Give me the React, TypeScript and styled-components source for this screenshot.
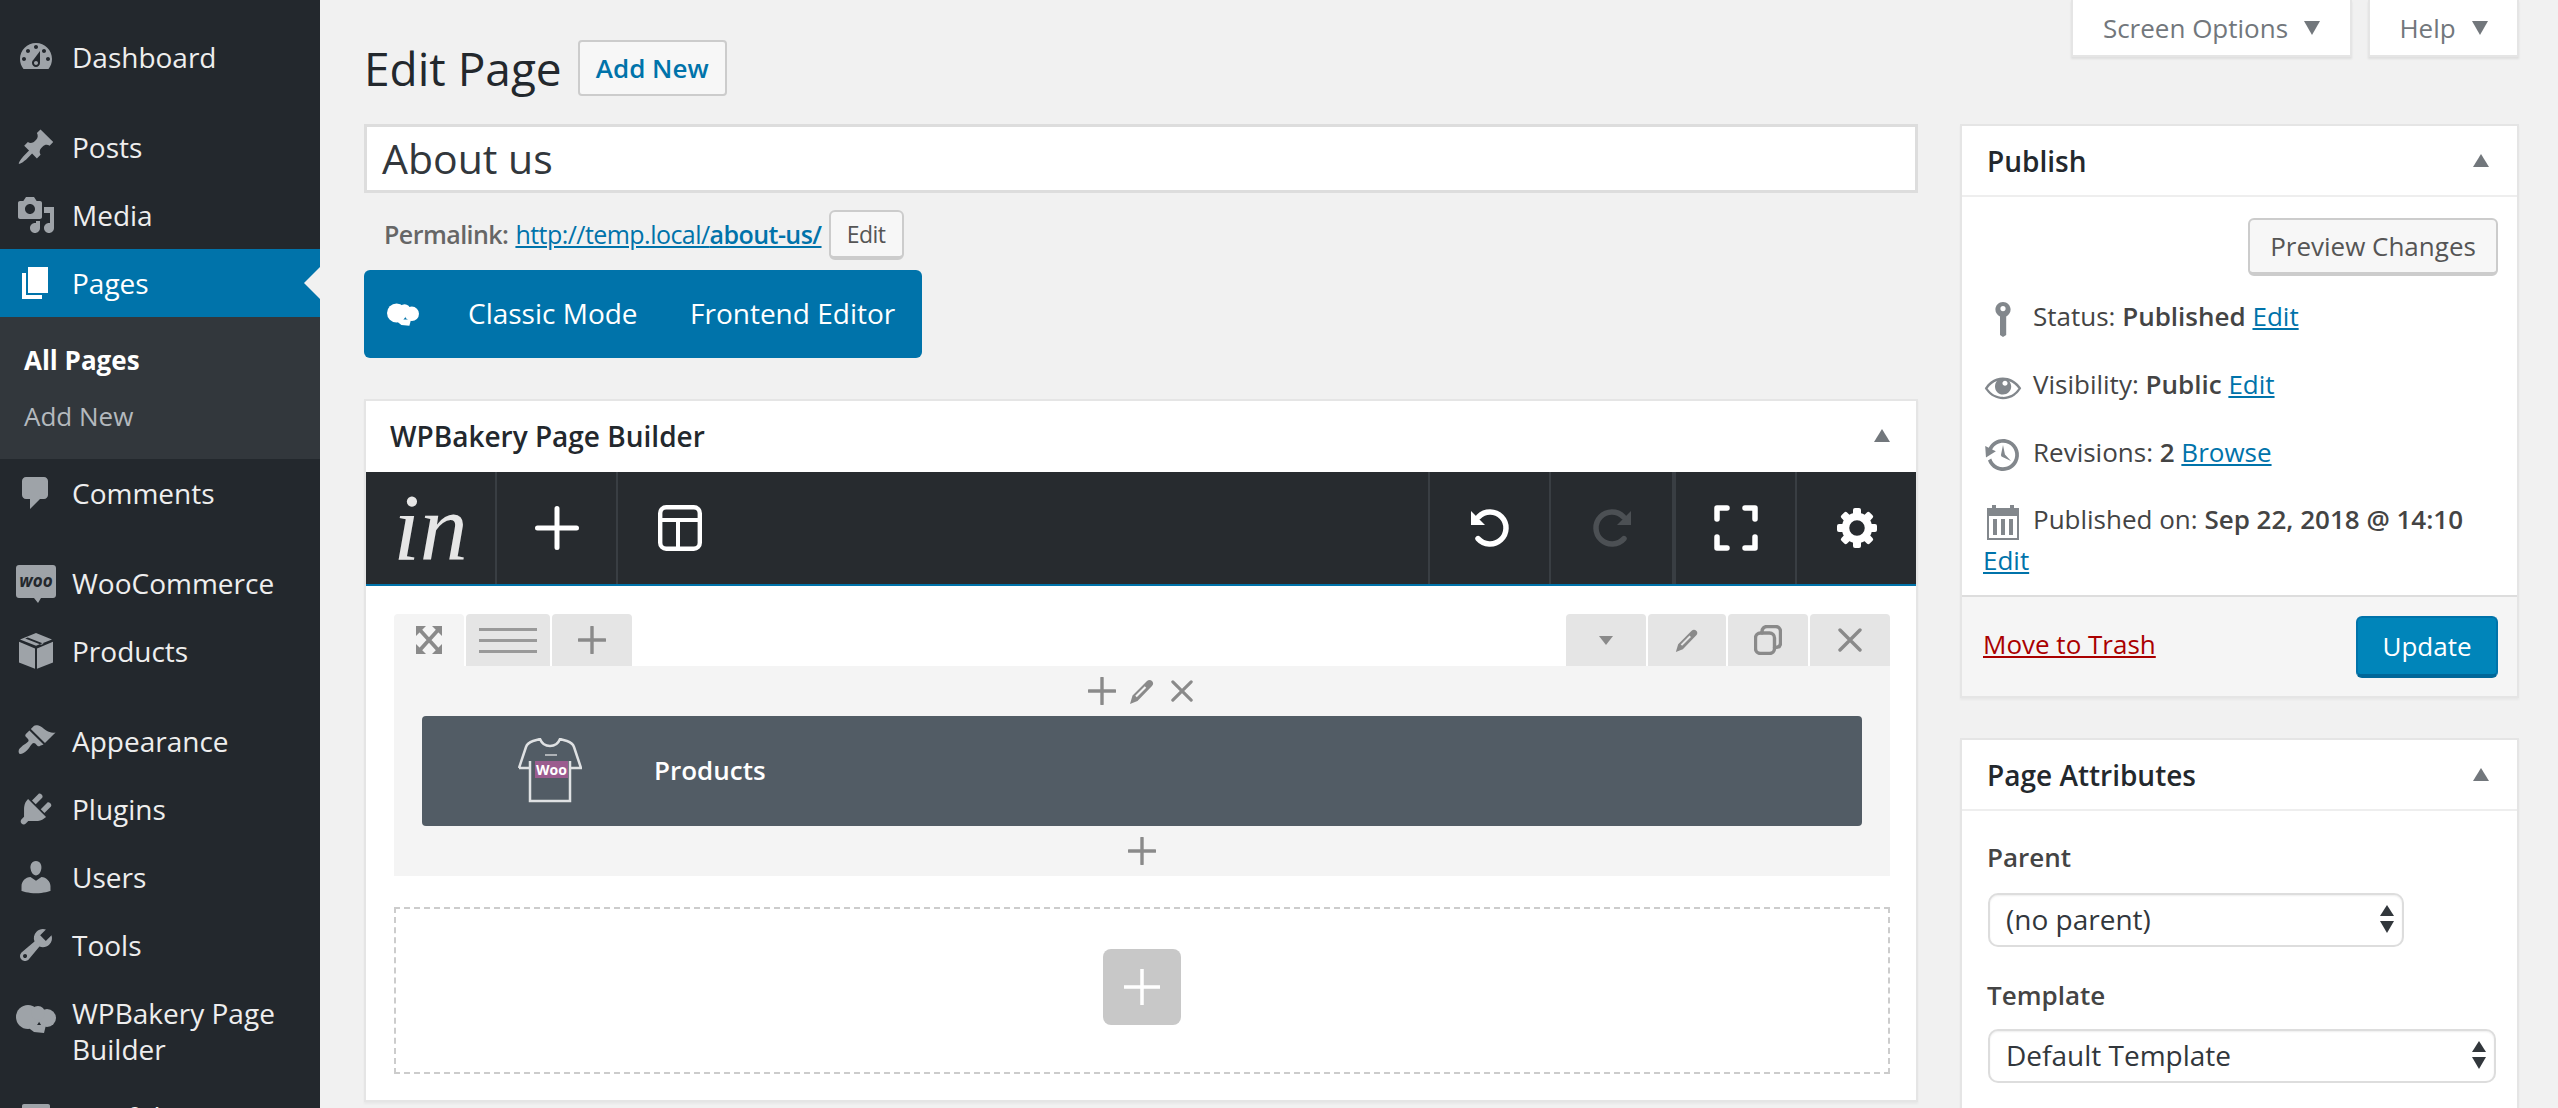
import React from "react";
import styled, { createGlobalStyle } from "styled-components";

const GlobalStyle = createGlobalStyle`
	html, body {
		margin: 0;
		padding: 0;
		height: 1108px;
		overflow: hidden;
		background: #f1f1f1;
	}
	body {
		font-family: "Open Sans", "Noto Sans", sans-serif;
		font-size: 26px;
		color: #444;
	}
	* {
		box-sizing: border-box;
	}
`;

const menuPaths: Record<string, string> = {
	dashboard:
		"M3.76 16h12.48c1.1-1.37 1.76-3.11 1.76-5 0-4.42-3.58-8-8-8s-8 3.58-8 8c0 1.89.66 3.63 1.76 5zM10 4c.55 0 1 .45 1 1s-.45 1-1 1-1-.45-1-1 .45-1 1-1zM6 6c.55 0 1 .45 1 1s-.45 1-1 1-1-.45-1-1 .45-1 1-1zm8 0c.55 0 1 .45 1 1s-.45 1-1 1-1-.45-1-1 .45-1 1-1zm-5.37 5.55L12 7v6c0 1.1-.9 2-2 2s-2-.9-2-2c0-.57.24-1.08.63-1.45zM4 10c.55 0 1 .45 1 1s-.45 1-1 1-1-.45-1-1 .45-1 1-1zm12 0c.55 0 1 .45 1 1s-.45 1-1 1-1-.45-1-1 .45-1 1-1zm-5 3c0-.55-.45-1-1-1s-1 .45-1 1 .45 1 1 1 1-.45 1-1z",
	posts:
		"M10.44 3.02l1.82-1.82 6.36 6.35-1.83 1.82c-1.05-.68-2.48-.57-3.41.36l-.75.75c-.92.93-1.04 2.35-.35 3.41l-1.83 1.82-2.41-2.41-2.8 2.79c-.42.42-3.38 2.71-3.8 2.29s1.86-3.39 2.28-3.81l2.79-2.79L4.1 9.36l1.83-1.82c1.05.69 2.48.57 3.4-.36l.75-.75c.93-.92 1.05-2.35.36-3.41z",
	media:
		"M13 11V4c0-.55-.45-1-1-1h-1.67L9 1H5L3.67 3H2c-.55 0-1 .45-1 1v7c0 .55.45 1 1 1h10c.55 0 1-.45 1-1zM7 4.5c1.38 0 2.5 1.12 2.5 2.5S8.38 9.5 7 9.5 4.5 8.38 4.5 7 5.62 4.5 7 4.5zM14 6h5v10.5c0 1.38-1.12 2.5-2.5 2.5S14 17.88 14 16.5s1.12-2.5 2.5-2.5c.17 0 .34.02.5.05V9h-3V6zm-4 8.05V13h2v3.5c0 1.38-1.12 2.5-2.5 2.5S7 17.88 7 16.5 8.12 14 9.5 14c.17 0 .34.02.5.05z",
	pages: "M6 15V2h10v13H6zm-1 1h8v2H3V5h2v11z",
	comments:
		"M5 2h9c1.1 0 2 .9 2 2v7c0 1.1-.9 2-2 2h-2l-5 5v-5H5c-1.1 0-2-.9-2-2V4c0-1.1.9-2 2-2z",
	products:
		"M10 1l8 3.2-8 3.2-8-3.2zM4.6 3.7l8 3.2 1.3-.5-8-3.2zM1.5 5.4l8 3.3v10.2l-8-3.2zM10.5 8.7l8-3.3v10.3l-8 3.2z",
	appearance:
		"M14.48 11.06L7.41 3.99l1.5-1.5c.5-.56 2.3-.47 3.51.32 1.21.8 1.43 1.28 2.91 2.1 1.18.64 2.45 1.26 4.45.85zm-.71.71L6.7 4.7 4.93 6.47c-.39.39-.39 1.02 0 1.41l1.06 1.06c.39.39.39 1.03 0 1.42-.6.6-1.43 1.11-2.21 1.69-.35.26-.7.53-1.01.84C1.43 13.71.96 15.08 1.54 16.3c.5.5 2.38.12 4.13-1.77.31-.31.58-.66.84-1.01.58-.78 1.09-1.61 1.69-2.21.39-.39 1.03-.39 1.42 0l1.06 1.06c.39.39 1.02.39 1.41 0z",
	plugins:
		"M13.11 4.36L9.87 7.6 8 5.73l3.24-3.24c.35-.34 1.05-.2 1.56.32.52.51.66 1.21.31 1.55zm-8 1.77l.91-1.12 9.01 9.01-1.19.84c-.71.71-2.63 1.16-3.82 1.16H6.14L4.9 17.26c-.59.59-1.54.59-2.12 0-.59-.58-.59-1.53 0-2.12l1.24-1.24v-3.88c0-1.13.4-3.19 1.09-3.89zm7.26 3.97l3.24-3.24c.34-.35 1.04-.21 1.55.31.52.51.66 1.21.31 1.55l-3.24 3.25z",
	users:
		"M10 9.25c-2.27 0-2.73-3.44-2.73-3.44C7 4.02 7.82 2 9.97 2c2.16 0 2.98 2.02 2.71 3.81 0 0-.41 3.44-2.68 3.44zm0 2.57L12.72 10c2.39 0 4.52 2.33 4.52 4.53v2.49s-3.65 1.13-7.24 1.13c-3.65 0-7.24-1.13-7.24-1.13v-2.49c0-2.25 1.94-4.48 4.47-4.48z",
	tools:
		"M16.68 9.77c-1.34 1.34-3.3 1.67-4.95.99l-5.41 6.52c-.99.99-2.59.99-3.58 0s-.99-2.59 0-3.57l6.52-5.42c-.68-1.65-.35-3.61.99-4.95 1.28-1.28 3.12-1.62 4.72-1.06l-2.89 2.89 2.82 2.82 2.86-2.87c.53 1.58.18 3.39-1.08 4.65zM3.81 16.21c.4.39 1.04.39 1.43 0 .4-.4.4-1.04 0-1.43-.39-.4-1.03-.4-1.43 0-.39.39-.39 1.03 0 1.43z",
	portfolio: "M4 3.5h12c.6 0 1 .4 1 1V17c0 .6-.4 1-1 1H4c-.6 0-1-.4-1-1V4.500c0-.6.4-1 1-1z",
};

type MenuEntry = { key: string; label: string; gapBefore?: boolean };

const topMenu: MenuEntry[] = [
	{ key: "dashboard", label: "Dashboard" },
	{ key: "posts", label: "Posts", gapBefore: true },
	{ key: "media", label: "Media" },
];

const lowerMenu: MenuEntry[] = [
	{ key: "comments", label: "Comments" },
	{ key: "woo", label: "WooCommerce", gapBefore: true },
	{ key: "products", label: "Products" },
	{ key: "appearance", label: "Appearance", gapBefore: true },
	{ key: "plugins", label: "Plugins" },
	{ key: "users", label: "Users" },
	{ key: "tools", label: "Tools" },
	{ key: "bakery", label: "WPBakery Page Builder" },
	{ key: "portfolio", label: "Portfolio" },
];

// the WPBakery cloud, used in the menu and on the blue mode bar
const BakeryCloud = () => (
	<>
		<circle cx="6" cy="11" r="6" />
		<circle cx="15.500" cy="11.500" r="4.500" />
		<circle cx="11" cy="9" r="3.500" />
		<polygon points="7,15 15,15 14,19 9,18.500 7,17" />
	</>
);

const MenuGlyph = ({ name }: { name: string }) => {
	if (name === "woo") {
		return (
			<MenuSvg viewBox="0 0 40 40">
				<path d="M3 2h34c1.7 0 3 1.3 3 3v27c0 1.7-1.3 3-3 3H25l-3 5-4-5H3c-1.700 0-3-1.300-3-3V5c0-1.700 1.300-3 3-3z" />
				<WooText x="20" y="24" textAnchor="middle">
					woo
				</WooText>
			</MenuSvg>
		);
	}
	if (name === "bakery") {
		return (
			<MenuSvg viewBox="0 0 20 20">
				<BakeryCloud />
			</MenuSvg>
		);
	}
	return (
		<MenuSvg viewBox="0 0 20 20">
			<path d={menuPaths[name]} />
		</MenuSvg>
	);
};

const MetaCaret = () => (
	<CaretSvg viewBox="0 0 16 14">
		<polygon points="0,0 16,0 8,14" />
	</CaretSvg>
);

const BoxCaret = () => (
	<BoxCaretSvg viewBox="0 0 16 13">
		<polygon points="8,0 16,13 0,13" />
	</BoxCaretSvg>
);

const SmallPlus = ({ size }: { size: number }) => (
	<LightSvg viewBox="0 0 28 28" width={size} height={size}>
		<path d="M14 1v26M1 14h26" />
	</LightSvg>
);

const SmallPencil = ({ size, slit }: { size: number; slit: string }) => (
	<FilledSvg viewBox="0 0 28 28" width={size} height={size}>
		<path d="M2 27l2.500-8.500L19 4c1.500-1.500 3.500-1.500 5 0s1.500 3.500 0 5L9.500 24z" />
		<path d="M8 19.500L17.500 10" stroke={slit} strokeWidth="2.200" fill="none" />
	</FilledSvg>
);

const SmallCross = ({ size }: { size: number }) => (
	<LightSvg viewBox="0 0 24 24" width={size} height={size}>
		<path d="M2 2l20 20M22 2L2 22" />
	</LightSvg>
);

const Gear = () => (
	<svg viewBox="0 0 44 44" width="44" height="44">
		<circle cx="22" cy="22" r="11.5" fill="none" stroke="#fff" strokeWidth="7.5" />
		{[0, 45, 90, 135, 180, 225, 270, 315].map((deg) => (
			<rect
				key={deg}
				x="18"
				y="2"
				width="8"
				height="8"
				rx="2"
				fill="#fff"
				transform={`rotate(${deg} 22 22)`}
			/>
		))}
	</svg>
);

const Sidebar = () => (
	<SideColumn>
		{topMenu.map((m) => (
			<MenuRow key={m.key} $gap={m.gapBefore}>
				<MenuGlyph name={m.key} />
				<span>{m.label}</span>
			</MenuRow>
		))}
		<MenuRow $active>
			<MenuGlyph name="pages" />
			<span>Pages</span>
		</MenuRow>
		<SubMenu>
			<SubItem $current>All Pages</SubItem>
			<SubItem>Add New</SubItem>
		</SubMenu>
		{lowerMenu.map((m) => (
			<MenuRow key={m.key} $gap={m.gapBefore} $tall={m.key === "bakery"}>
				<MenuGlyph name={m.key} />
				<span>{m.label}</span>
			</MenuRow>
		))}
	</SideColumn>
);

const BuilderBox = () => (
	<Box>
		<BoxHeader>
			<BoxTitle>WPBakery Page Builder</BoxTitle>
			<BoxCaret />
		</BoxHeader>
		<Toolbar>
			<ToolGroup>
				<ToolCell $w={131}>
					<LogoMark>in</LogoMark>
				</ToolCell>
				<ToolCell $w={121}>
					<ToolSvg viewBox="0 0 44 44" width="44" height="44">
						<path d="M22 2.500v39M2.500 22h39" />
					</ToolSvg>
				</ToolCell>
				<ToolCell $w={124} $plain>
					<ToolSvg viewBox="0 0 44 46" width="44" height="46">
						<rect x="2.200" y="2.200" width="39.600" height="41.600" rx="6" strokeWidth="4.400" />
						<path d="M2.200 15h39.600M20 15v29" strokeWidth="4" strokeLinecap="butt" />
					</ToolSvg>
				</ToolCell>
			</ToolGroup>
			<ToolGroup>
				<ToolCell $w={123} $first>
					<ToolSvg viewBox="0 0 48 48" width="48" height="48">
						<path d="M12.700 12.700A16 16 0 1 1 12 34.600" strokeWidth="5.500" />
						<polygon points="5,7 5,21 19,21" fill="#fff" stroke="none" />
					</ToolSvg>
				</ToolCell>
				<ToolCell $w={123}>
					<ToolSvg viewBox="0 0 48 48" width="48" height="48" $dim>
						<path d="M35.300 12.700A16 16 0 1 0 36 34.600" strokeWidth="5.500" />
						<polygon points="43,7 43,21 29,21" fill="#4c5054" stroke="none" />
					</ToolSvg>
				</ToolCell>
				<ToolCell $w={123} $thick>
					<ToolSvg viewBox="0 0 44 46" width="44" height="46">
						<path
							d="M13 3H3v11M31 3h10v11M13 43H3V32M31 43h10V32"
							strokeWidth="5.500"
						/>
					</ToolSvg>
				</ToolCell>
				<ToolCell $w={119} $plain>
					<Gear />
				</ToolCell>
			</ToolGroup>
		</Toolbar>
		<Canvas>
			<RowTabs>
				<TabGroup>
					<RowTab $w={70} $open>
						<GreySvg viewBox="0 0 26 28" width="26" height="28">
							<polygon points="0,0 10,0 0,10" />
							<polygon points="26,0 16,0 26,10" />
							<polygon points="0,28 10,28 0,18" />
							<polygon points="26,28 16,28 26,18" />
							<path d="M3 3l20 22M23 3L3 25" stroke="#8a8a8a" strokeWidth="3.800" />
						</GreySvg>
					</RowTab>
					<RowTab $w={84}>
						<LinesIcon>
							<i />
							<i />
							<i />
						</LinesIcon>
					</RowTab>
					<RowTab $w={80}>
						<SmallPlus size={28} />
					</RowTab>
				</TabGroup>
				<TabGroup>
					<RowTab $w={80}>
						<GreySvg viewBox="0 0 14 9" width="14" height="9">
							<polygon points="0,0 14,0 7,9" />
						</GreySvg>
					</RowTab>
					<RowTab $w={78}>
						<SmallPencil size={26} slit="#e5e5e5" />
					</RowTab>
					<RowTab $w={80}>
						<LightSvg viewBox="0 0 28 30" width="28" height="30">
							<rect x="1.500" y="8" width="19" height="20.500" rx="5" />
							<path d="M8 8V6.500c0-2.800 2-5 5-5h8.500c2.800 0 5 2.200 5 5V18c0 2.800-2 4.500-5 4.500h-1" />
						</LightSvg>
					</RowTab>
					<RowTab $w={80}>
						<SmallCross size={24} />
					</RowTab>
				</TabGroup>
			</RowTabs>
			<RowBody>
				<ElementControls>
					<SmallPlus size={28} />
					<SmallPencil size={28} slit="#f4f4f4" />
					<SmallCross size={22} />
				</ElementControls>
				<ElementCard>
					<svg viewBox="0 0 64 65" width="64" height="65">
						<path
							d="M12 23v40h40V23M1 30l7-21c1-3 4-5 7-6l7-2c2 5 5 7 10 7s8-2 10-7l7 2c3 1 6 3 7 6l7 21H53M1 30h11"
							fill="none"
							stroke="#dfe1e3"
							strokeWidth="2.500"
						/>
						<path d="M27 17h12" stroke="#aeb2b6" strokeWidth="2" />
						<rect x="17" y="23" width="33" height="17" fill="#9b5c8f" />
						<ShirtLabel x="33.500" y="36.500" textAnchor="middle">
							Woo
						</ShirtLabel>
					</svg>
					<ElementName>Products</ElementName>
				</ElementCard>
				<ElementAdd>
					<SmallPlus size={28} />
				</ElementAdd>
			</RowBody>
			<DropZone>
				<AddRowButton>
					<svg viewBox="0 0 36 36" width="36" height="36">
						<path d="M18 0v36M0 18h36" stroke="#fff" strokeWidth="3.500" />
					</svg>
				</AddRowButton>
			</DropZone>
		</Canvas>
	</Box>
);

const PublishBox = () => (
	<Box>
		<SideBoxHeader>
			<BoxTitle>Publish</BoxTitle>
			<BoxCaret />
		</SideBoxHeader>
		<PublishBody>
			<PreviewLine>
				<WpButton $w={250} $h={58}>
					Preview Changes
				</WpButton>
			</PreviewLine>
			<MiscRow>
				<MiscIcon viewBox="0 0 20 20">
					<path d="M10 1.500c2.100 0 3.800 1.700 3.800 3.800 0 1.500-.9 2.800-2.200 3.400v9.300L10 19l-1.500-1V8.700C7.100 8.100 6.200 6.800 6.200 5.300c0-2.100 1.700-3.800 3.800-3.800zM10 3.500a1.300 1.300 0 1 0 0 2.600 1.300 1.300 0 0 0 0-2.600z" />
				</MiscIcon>
				Status: <b>Published</b> <Link>Edit</Link>
			</MiscRow>
			<MiscRow>
				<MiscIcon viewBox="0 0 20 20">
					<path d="M18.300 9.500C15 4.900 8.500 3.800 3.900 7.200c-1.200.9-2.200 2.100-3 3.400.2.400.5.8.8 1.200 3.300 4.600 9.600 5.600 14.200 2.400.9-.7 1.700-1.400 2.400-2.400.3-.4.5-.8.8-1.200-.3-.4-.5-.8-.8-1.100zm-8.200-2.300c.5-.5 1.300-.5 1.800 0s.5 1.300 0 1.800-1.300.5-1.800 0c-.5-.4-.5-1.300 0-1.800zm-.1 7.700c-3.100 0-6-1.600-7.700-4.200C3.500 9 5.100 7.800 7 7c-.7.800-1 1.700-1 2.700 0 2.200 1.700 4.100 4 4.100 2.200 0 4.100-1.700 4.100-4 0-1-.4-2-1-2.700 1.900.8 3.500 2 4.600 3.700-1.700 2.600-4.600 4.200-7.700 4.200z" />
				</MiscIcon>
				Visibility: <b>Public</b> <Link>Edit</Link>
			</MiscRow>
			<MiscRow>
				<MiscIcon viewBox="0 0 20 20">
					<path d="M13.650 2.880c3.930 2.010 5.480 6.840 3.470 10.770s-6.830 5.480-10.770 3.470c-1.870-.96-3.200-2.560-3.860-4.400l1.640-1.030c.45 1.570 1.520 2.950 3.080 3.760 3.010 1.540 6.690.35 8.230-2.660 1.550-3.010.36-6.690-2.650-8.240C9.780 3.010 6.100 4.200 4.560 7.210l1.880.97-4.950 3.080-.39-5.820 1.780.91C4.900 2.400 9.750.89 13.650 2.880zm-4.360 7.830C9.110 10.530 9 10.280 9 10c0-.07.03-.12.04-.19h-.01L10 5l.97 4.810L14 13l-4.500-2.120.02-.02c-.08-.04-.16-.09-.23-.15z" />
				</MiscIcon>
				Revisions: <b>2</b> <Link>Browse</Link>
			</MiscRow>
			<MiscRow>
				<MiscIcon viewBox="0 0 20 20">
					<path d="M2 3h2.500V1.500h2V3h7V1.500h2V3H18v16H2zM3 7v11h14V7zM5 8.500h2v8H5zM9 8.500h2v8H9zM13 8.500h2v8h-2z" fillRule="evenodd" />
				</MiscIcon>
				Published on: <b>Sep 22, 2018 @ 14:10</b> <Link>Edit</Link>
			</MiscRow>
		</PublishBody>
		<PublishFooter>
			<TrashLink>Move to Trash</TrashLink>
			<PrimaryButton>Update</PrimaryButton>
		</PublishFooter>
	</Box>
);

const AttributesBox = () => (
	<Box>
		<SideBoxHeader>
			<BoxTitle>Page Attributes</BoxTitle>
			<BoxCaret />
		</SideBoxHeader>
		<AttrBody>
			<FieldLabel>Parent</FieldLabel>
			<FakeSelect $w={416}>
				(no parent)
				<SelectArrows viewBox="0 0 14 28">
					<polygon points="7,0 14,11 0,11" />
					<polygon points="0,16 14,16 7,28" />
				</SelectArrows>
			</FakeSelect>
			<FieldLabel $second>Template</FieldLabel>
			<FakeSelect $w={508}>
				Default Template
				<SelectArrows viewBox="0 0 14 28">
					<polygon points="7,0 14,11 0,11" />
					<polygon points="0,16 14,16 7,28" />
				</SelectArrows>
			</FakeSelect>
		</AttrBody>
	</Box>
);

export default function App() {
	return (
		<Page>
			<GlobalStyle />
			<Sidebar />
			<Main>
				<TopRow>
					<HeadingLine>
						<Heading>Edit Page</Heading>
						<WpButton $w={149} $h={56} $link>
							Add New
						</WpButton>
					</HeadingLine>
					<MetaTabs>
						<MetaTab $w={281}>
							Screen Options <MetaCaret />
						</MetaTab>
						<MetaTab $w={151}>
							Help <MetaCaret />
						</MetaTab>
					</MetaTabs>
				</TopRow>
				<Columns>
					<LeftColumn>
						<TitleInput>About us</TitleInput>
						<PermalinkRow>
							<b>Permalink:</b>
							<Link>
								http://temp.local/<b>about-us/</b>
							</Link>
							<WpButton $w={75} $h={50} $small>
								Edit
							</WpButton>
						</PermalinkRow>
						<ModeBar>
							<ModeCloud viewBox="0 1 20 20">
								<BakeryCloud />
							</ModeCloud>
							<ModeText $w={222}>Classic Mode</ModeText>
							<ModeText>Frontend Editor</ModeText>
						</ModeBar>
						<BuilderBox />
					</LeftColumn>
					<RightColumn>
						<PublishBox />
						<AttributesBox />
					</RightColumn>
				</Columns>
			</Main>
		</Page>
	);
}

const Page = styled.div`
	display: flex;
	width: 2558px;
	height: 1108px;
	overflow: hidden;
`;

const SideColumn = styled.nav`
	flex: 0 0 320px;
	height: 1108px;
	padding-top: 23px;
	background: #23282d;
	overflow: hidden;
`;

const MenuRow = styled.div<{ $active?: boolean; $gap?: boolean; $tall?: boolean }>`
	position: relative;
	display: flex;
	align-items: ${(p) => (p.$tall ? "flex-start" : "center")};
	gap: 16px;
	min-height: 68px;
	margin-top: ${(p) => (p.$gap ? "22px" : "0")};
	padding: ${(p) => (p.$tall ? "16px 30px 16px 16px" : "0 30px 0 16px")};
	font-size: 28px;
	line-height: 36px;
	color: ${(p) => (p.$active ? "#fff" : "#eee")};
	background: ${(p) => (p.$active ? "#0073aa" : "transparent")};
	svg {
		fill: ${(p) => (p.$active ? "#fff" : "#9ea3a8")};
	}
	${(p) =>
		p.$active &&
		`
		&::after {
			content: "";
			position: absolute;
			right: 0;
			top: 18px;
			border: 16px solid transparent;
			border-right-color: #f1f1f1;
			border-left-width: 0;
		}
	`}
`;

const MenuSvg = styled.svg`
	flex: 0 0 40px;
	width: 40px;
	height: 40px;
`;

const WooText = styled.text`
	font-family: "Open Sans", sans-serif;
	font-size: 17px;
	font-weight: 700;
	font-style: italic;
	fill: #23282d;
`;

const SubMenu = styled.div`
	padding: 15px 0 15px 24px;
	background: #32373c;
`;

const SubItem = styled.div<{ $current?: boolean }>`
	display: flex;
	align-items: center;
	height: 56px;
	font-size: 26px;
	font-weight: ${(p) => (p.$current ? 700 : 400)};
	color: ${(p) => (p.$current ? "#fff" : "#b4b9be")};
`;

const Main = styled.main`
	flex: 1;
	min-width: 0;
	padding: 0 39px 0 44px;
`;

const TopRow = styled.div`
	display: flex;
	justify-content: space-between;
	align-items: flex-start;
	height: 124px;
`;

const HeadingLine = styled.div`
	display: flex;
	align-items: center;
	gap: 16px;
	margin-top: 40px;
`;

const Heading = styled.h1`
	margin: 0;
	font-size: 46px;
	font-weight: 400;
	line-height: 56px;
	color: #23282d;
`;

const WpButton = styled.div<{ $w: number; $h: number; $link?: boolean; $small?: boolean }>`
	display: flex;
	align-items: center;
	justify-content: center;
	flex: 0 0 auto;
	width: ${(p) => p.$w}px;
	height: ${(p) => p.$h}px;
	font-size: ${(p) => (p.$small ? "23px" : "26px")};
	font-weight: ${(p) => (p.$link ? 600 : 400)};
	color: ${(p) => (p.$link ? "#0073aa" : "#555")};
	background: #f7f7f7;
	border: 2px solid #ccc;
	border-bottom-width: ${(p) => (p.$link ? "2px" : "4px")};
	border-radius: ${(p) => (p.$link ? "4px" : "6px")};
`;

const MetaTabs = styled.div`
	display: flex;
	gap: 16px;
`;

const MetaTab = styled.div<{ $w: number }>`
	display: flex;
	align-items: center;
	justify-content: center;
	gap: 16px;
	width: ${(p) => p.$w}px;
	height: 57px;
	font-size: 26px;
	color: #72777c;
	background: #fff;
	border: 2px solid #e5e5e5;
	border-top: 0;
	box-shadow: 0 2px 2px rgba(0, 0, 0, 0.08);
`;

const CaretSvg = styled.svg`
	width: 16px;
	height: 14px;
	fill: #72777c;
`;

const BoxCaretSvg = styled.svg`
	width: 16px;
	height: 13px;
	fill: #72777c;
`;

const Columns = styled.div`
	display: flex;
	gap: 42px;
`;

const LeftColumn = styled.div`
	flex: 0 0 1554px;
`;

const RightColumn = styled.div`
	flex: 0 0 559px;
	display: flex;
	flex-direction: column;
	gap: 40px;
`;

const TitleInput = styled.div`
	display: flex;
	align-items: center;
	height: 69px;
	padding: 0 0 2px 15px;
	font-size: 41px;
	color: #32373c;
	background: #fff;
	border: 3px solid #ddd;
`;

const PermalinkRow = styled.div`
	display: flex;
	align-items: center;
	gap: 7px;
	height: 50px;
	margin-top: 17px;
	padding-left: 20px;
	font-size: 25px;
	letter-spacing: -0.55px;
	color: #666;
	b {
		font-weight: 600;
	}
	a {
		margin-bottom: 3px;
	}
	& > b {
		margin-bottom: 3px;
	}
`;

const Link = styled.a`
	color: #0073aa;
	text-decoration: underline;
`;

const ModeBar = styled.div`
	display: flex;
	align-items: center;
	width: 558px;
	height: 88px;
	margin-top: 10px;
	padding: 0 0 2px 23px;
	background: #0073aa;
	border-radius: 6px;
`;

const ModeCloud = styled.svg`
	width: 32px;
	height: 32px;
	margin-right: 49px;
	fill: #fff;
`;

const ModeText = styled.span<{ $w?: number }>`
	width: ${(p) => (p.$w ? `${p.$w}px` : "auto")};
	font-size: 28px;
	color: #fff;
	white-space: nowrap;
`;

const Box = styled.section`
	background: #fff;
	border: 2px solid #e5e5e5;
	box-shadow: 0 2px 2px rgba(0, 0, 0, 0.04);
	${LeftColumn} & {
		height: 703px;
		margin-top: 41px;
	}
`;

const BoxHeader = styled.header`
	display: flex;
	align-items: center;
	justify-content: space-between;
	height: 71px;
	padding: 0 26px 2px 24px;
`;

const SideBoxHeader = styled(BoxHeader)`
	height: 71px;
	padding: 0 28px 0 25px;
	border-bottom: 2px solid #eee;
`;

const BoxTitle = styled.h2`
	margin: 0;
	font-size: 28px;
	font-weight: 600;
	color: #23282d;
`;

const Toolbar = styled.div`
	display: flex;
	justify-content: space-between;
	height: 114px;
	background: #272b2f;
	border-bottom: 2px solid #0073aa;
`;

const ToolGroup = styled.div`
	display: flex;
`;

const ToolCell = styled.div<{ $w: number; $plain?: boolean; $first?: boolean; $thick?: boolean }>`
	display: flex;
	align-items: center;
	justify-content: center;
	width: ${(p) => p.$w}px;
	border-right: ${(p) => (p.$plain ? "0" : "2px")} solid #393e43;
	border-left: ${(p) => (p.$first || p.$thick ? "2px" : "0")} solid #393e43;
`;

const LogoMark = styled.span`
	font-family: "Liberation Serif", serif;
	font-style: italic;
	font-size: 96px;
	line-height: 100px;
	color: #e6e6e6;
`;

const ToolSvg = styled.svg<{ $dim?: boolean }>`
	fill: none;
	stroke: ${(p) => (p.$dim ? "#4c5054" : "#fff")};
	stroke-width: 5px;
	stroke-linecap: round;
	stroke-linejoin: round;
`;

const GreySvg = styled.svg`
	fill: #8a8a8a;
`;

const LightSvg = styled.svg`
	fill: none;
	stroke: #8a8a8a;
	stroke-width: 3.4px;
	stroke-linecap: round;
`;

const FilledSvg = styled.svg`
	fill: #8a8a8a;
`;

const Canvas = styled.div`
	padding: 28px 26px 0 28px;
`;

const RowTabs = styled.div`
	display: flex;
	justify-content: space-between;
	height: 52px;
`;

const TabGroup = styled.div`
	display: flex;
	gap: 2px;
`;

const RowTab = styled.div<{ $w: number; $open?: boolean }>`
	display: flex;
	align-items: center;
	justify-content: center;
	width: ${(p) => p.$w}px;
	background: ${(p) => (p.$open ? "#f4f4f4" : "#e5e5e5")};
	border-radius: 4px 4px 0 0;
`;

const LinesIcon = styled.div`
	display: flex;
	flex-direction: column;
	gap: 8px;
	width: 58px;
	i {
		display: block;
		height: 3px;
		background: #999;
	}
`;

const RowBody = styled.div`
	height: 210px;
	padding: 0 28px;
	background: #f4f4f4;
`;

const ElementControls = styled.div`
	display: flex;
	align-items: center;
	justify-content: center;
	gap: 12px;
	height: 50px;
	svg:last-child {
		margin: 0 3px;
	}
`;

const ElementCard = styled.div`
	display: flex;
	align-items: center;
	gap: 72px;
	height: 110px;
	padding: 0 0 2px 96px;
	background: #525c65;
	border-radius: 4px;
`;

const ElementName = styled.span`
	font-size: 26px;
	font-weight: 600;
	color: #fff;
`;

const ShirtLabel = styled.text`
	font-family: "Open Sans", sans-serif;
	font-size: 14px;
	font-weight: 700;
	fill: #fff;
`;

const ElementAdd = styled.div`
	display: flex;
	align-items: center;
	justify-content: center;
	height: 50px;
`;

const DropZone = styled.div`
	display: flex;
	align-items: center;
	justify-content: center;
	height: 167px;
	margin-top: 31px;
	padding-bottom: 8px;
	border: 2px dashed #ccc;
`;

const AddRowButton = styled.div`
	display: flex;
	align-items: center;
	justify-content: center;
	width: 78px;
	height: 76px;
	background: #c8c8c8;
	border-radius: 8px;
`;

const PublishBody = styled.div`
	padding: 21px 19px 14px 21px;
`;

const PreviewLine = styled.div`
	display: flex;
	justify-content: flex-end;
	margin-bottom: 7px;
`;

const MiscRow = styled.div`
	min-height: 68px;
	line-height: 41px;
	padding-top: 13px;
	font-size: 26px;
	b {
		font-weight: 600;
	}
	&:last-child {
		padding-top: 12px;
	}
`;

const MiscIcon = styled.svg`
	display: inline-block;
	width: 40px;
	height: 40px;
	margin: -4px 10px -4px 0;
	vertical-align: middle;
	fill: #82878c;
`;

const PublishFooter = styled.footer`
	display: flex;
	align-items: center;
	justify-content: space-between;
	height: 101px;
	padding: 0 19px 0 21px;
	background: #f5f5f5;
	border-top: 2px solid #ddd;
`;

const TrashLink = styled.a`
	margin-bottom: 5px;
	font-size: 26px;
	color: #a00;
	text-decoration: underline;
`;

const PrimaryButton = styled.div`
	display: flex;
	align-items: center;
	justify-content: center;
	width: 142px;
	height: 62px;
	font-size: 26px;
	color: #fff;
	background: #0085ba;
	border: 2px solid #0073aa;
	border-bottom: 4px solid #006799;
	border-radius: 6px;
`;

const AttrBody = styled.div`
	padding: 26px 0 60px 26px;
`;

const FieldLabel = styled.div<{ $second?: boolean }>`
	margin-top: ${(p) => (p.$second ? "28px" : "0")};
	margin-bottom: ${(p) => (p.$second ? "14px" : "16px")};
	margin-left: -1px;
	font-size: 26px;
	font-weight: 600;
	line-height: 40px;
`;

const FakeSelect = styled.div<{ $w: number }>`
	display: flex;
	align-items: center;
	justify-content: space-between;
	width: ${(p) => p.$w}px;
	height: 54px;
	padding: 0 8px 2px 16px;
	font-size: 28px;
	color: #32373c;
	background: #fff;
	border: 2px solid #ddd;
	border-radius: 10px;
	box-shadow: inset 0 1px 2px rgba(0, 0, 0, 0.07);
`;

const SelectArrows = styled.svg`
	width: 14px;
	height: 28px;
	fill: #32373c;
`;
